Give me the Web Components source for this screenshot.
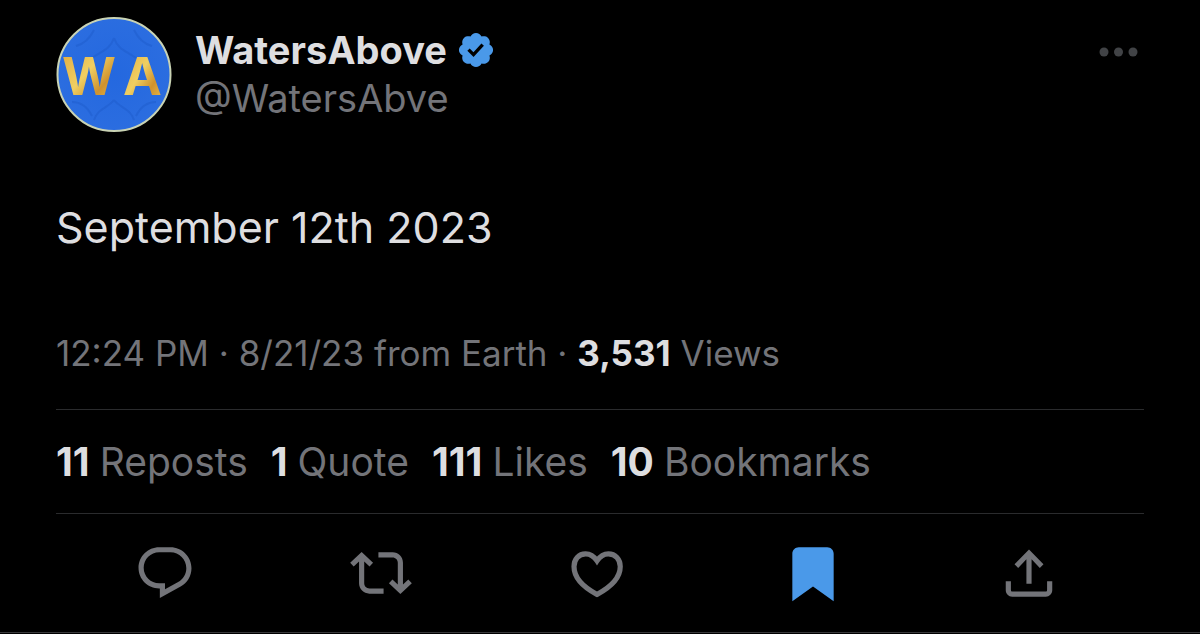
<!DOCTYPE html>
<html lang="en">
<head>
<meta charset="utf-8">
<meta name="viewport" content="width=device-width, initial-scale=1">
<title>WatersAbove: September 12th 2023</title>
<style>
  :root {
    --text: #dedee0;
    --muted: #737479;
    --accent: #4a99e9;
    --line: #2a2b2d;
    --gutter: 56px;
  }
  body {
    margin: 0;
    min-height: 100vh;
    background: #000;
    color: var(--text);
    font-family: Inter, "Liberation Sans", sans-serif;
  }
</style>
</head>
<body>
<post-card>
  <post-author slot="author" handle="@WatersAbve">WatersAbove</post-author>
  <span slot="body">September 12th 2023</span>
  <post-meta slot="meta" views="3,531">12:24 PM · 8/21/23 from Earth ·</post-meta>
  <post-stat slot="stats" count="11">Reposts</post-stat>
  <post-stat slot="stats" count="1">Quote</post-stat>
  <post-stat slot="stats" count="111">Likes</post-stat>
  <post-stat slot="stats" count="10">Bookmarks</post-stat>
  <post-action slot="actions" icon="reply" label="Reply"></post-action>
  <post-action slot="actions" icon="repost" label="Repost"></post-action>
  <post-action slot="actions" icon="like" label="Like"></post-action>
  <post-action slot="actions" icon="bookmark" label="Bookmark" active></post-action>
  <post-action slot="actions" icon="share" label="Share"></post-action>
</post-card>

<script>
const define = (name, render) => customElements.define(name, class extends HTMLElement {
  constructor() {
    super();
    this.attachShadow({ mode: 'open' }).innerHTML = render(this);
  }
});

define('post-card', () => `
  <style>
    :host { display: block; padding-top: 16px; border-bottom: 1px solid #38383a; }
    header, .body, .meta { padding: 0 var(--gutter); }
    .body { margin: 67px 0 0; font-size: 43px; line-height: 56px; }
    .meta { margin-top: 74px; }
    .stats {
      display: flex; flex-wrap: wrap; column-gap: 23px;
      margin: 32px var(--gutter) 0; padding: 28px 0 27px;
      border: solid var(--line); border-width: 1px 0;
    }
    .actions {
      display: grid; grid-template-columns: repeat(5, 1fr);
      padding: 28px 63px 28px 57px;
    }
  </style>
  <article>
    <header><slot name="author"></slot></header>
    <p class="body"><slot name="body"></slot></p>
    <div class="meta"><slot name="meta"></slot></div>
    <div class="stats"><slot name="stats"></slot></div>
    <div class="actions"><slot name="actions"></slot></div>
  </article>`);

define('user-avatar', () => `
  <style>
    :host { display: block; flex: none; width: 116px; height: 116px; }
    svg { display: block; width: 100%; height: 100%; }
    text { font: 700 52px Inter, sans-serif; fill: url(#gold); }
  </style>
  <svg viewBox="0 0 116 116" role="img" aria-label="WatersAbove avatar">
    <defs>
      <linearGradient id="gold" x1="0" y1="0" x2="1" y2="1">
        <stop offset="0" stop-color="#e0a83e"/><stop offset=".45" stop-color="#f0cf62"/>
        <stop offset=".7" stop-color="#cf922d"/><stop offset="1" stop-color="#efc653"/>
      </linearGradient>
      <radialGradient id="sea"><stop offset="0" stop-color="#2468df"/><stop offset="1" stop-color="#2b6de0"/></radialGradient>
    </defs>
    <circle cx="58" cy="58.500" r="56.500" fill="url(#sea)" stroke="#c9d3b4" stroke-width="2"/>
    <g fill="none" stroke="#1e5ccb" stroke-width="2" opacity=".5">
      <path d="M58 22c-4 12-14 14-22 20M58 22c4 12 14 14 22 20M58 84c-6 8-16 8-20 20M58 84c6 8 16 8 20 20M20 30c8-2 14-8 18-16M96 30c-8-2-14-8-18-16M16 86c10 0 16 6 20 14M100 86c-10 0-16 6-20 14"/>
    </g>
    <text x="6" y="79">W</text>
    <text x="67" y="79">A</text>
  </svg>`);

define('verified-badge', () => `
  <style>
    :host { display: block; width: 40px; height: 40px; color: var(--accent); }
    svg { display: block; width: 100%; height: 100%; fill: currentColor; }
  </style>
  <svg viewBox="0 0 22 22" role="img" aria-label="Verified account"><path d="M20.396 11c-.018-.646-.215-1.275-.57-1.816-.354-.54-.852-.972-1.438-1.246.223-.607.27-1.264.14-1.897-.131-.634-.437-1.218-.882-1.687-.47-.445-1.053-.75-1.687-.882-.633-.13-1.29-.083-1.897.14-.273-.587-.704-1.086-1.245-1.44S11.647 1.62 11 1.604c-.646.017-1.273.213-1.813.568s-.969.854-1.24 1.44c-.608-.223-1.267-.272-1.902-.14-.635.13-1.22.436-1.69.882-.445.47-.749 1.055-.878 1.688-.13.633-.08 1.29.144 1.896-.587.274-1.087.705-1.443 1.245-.356.54-.555 1.17-.574 1.817.02.647.218 1.276.574 1.817.356.54.856.972 1.443 1.245-.224.606-.274 1.263-.144 1.896.13.634.433 1.218.877 1.688.47.443 1.054.747 1.687.878.633.132 1.29.084 1.897-.136.274.586.705 1.084 1.246 1.439.54.354 1.17.551 1.816.569.647-.016 1.276-.213 1.817-.567s.972-.854 1.245-1.44c.604.239 1.266.296 1.903.164.636-.132 1.22-.447 1.68-.907.46-.46.776-1.044.908-1.681s.075-1.299-.165-1.903c.586-.274 1.084-.705 1.439-1.246.354-.54.551-1.17.569-1.816zM9.662 14.85l-3.429-3.428 1.293-1.302 2.072 2.072 4.4-4.794 1.347 1.246z"/></svg>`);

define('post-author', el => `
  <style>
    :host { display: flex; align-items: center; gap: 23px; }
    .names { flex: 1; min-width: 0; font-size: 38px; line-height: 48px; }
    .name { display: flex; align-items: center; gap: 9px; height: 48px; font-weight: 700; }
    .handle { color: var(--muted); }
    a { color: inherit; text-decoration: none; }
    button {
      align-self: flex-start; margin-top: 12px; width: 50px; height: 48px;
      padding: 0; border: 0; background: none; color: #414346; cursor: pointer;
    }
    svg { display: block; width: 50px; height: 48px; fill: currentColor; }
  </style>
  <user-avatar></user-avatar>
  <div class="names">
    <div class="name"><a href="#profile"><slot></slot></a><verified-badge></verified-badge></div>
    <div class="handle"><a href="#profile">${el.getAttribute('handle')}</a></div>
  </div>
  <button type="button" aria-label="More">
    <svg viewBox="0 0 50 48" aria-hidden="true"><circle cx="10" cy="24" r="4.500"/><circle cx="24.500" cy="24" r="4.500"/><circle cx="39" cy="24" r="4.500"/></svg>
  </button>`);

define('post-meta', el => `
  <style>
    :host { display: block; color: var(--muted); font-size: 35px; line-height: 48px; }
    strong { color: var(--text); font-weight: 700; }
  </style>
  <slot></slot> <strong>${el.getAttribute('views')}</strong> Views`);

define('post-stat', el => `
  <style>
    :host { display: block; font-size: 39px; line-height: 48px; }
    a { display: flex; gap: 10px; color: var(--muted); text-decoration: none; }
    strong { color: var(--text); font-weight: 700; }
  </style>
  <a href="#stats"><strong>${el.getAttribute('count')}</strong><slot></slot></a>`);

const icons = {
  reply: '<path d="M1.751 10c0-4.42 3.584-8 8.005-8h4.366c4.49 0 8.129 3.64 8.129 8.13 0 2.96-1.607 5.68-4.196 7.11l-8.054 4.46v-3.69h-.067c-4.49.1-8.183-3.51-8.183-8.01zm8.005-6c-3.317 0-6.005 2.69-6.005 6 0 3.37 2.77 6.08 6.138 6.01l.351-.01h1.761v2.3l5.087-2.81c1.951-1.08 3.163-3.13 3.163-5.36 0-3.39-2.744-6.13-6.129-6.13H9.756z"/>',
  repost: '<path d="M4.5 3.88l4.432 4.14-1.364 1.46L5.5 7.55V16c0 1.1.896 2 2 2H13v2H7.5c-2.209 0-4-1.79-4-4V7.55L1.432 9.48.068 8.02 4.5 3.88zM16.5 6H11V4h5.5c2.209 0 4 1.79 4 4v8.45l2.068-1.93 1.364 1.46-4.432 4.14-4.432-4.14 1.364-1.46 2.068 1.93V8c0-1.1-.896-2-2-2z"/>',
  like: '<path fill="none" stroke="currentColor" stroke-width="2" d="M12 7.3C10.700 5.400 9.200 4.600 7.600 4.600 4.900 4.600 3.100 6.700 3.100 9.500 3.100 14.100 7.300 17.800 12 20.300 16.700 17.800 21 14.100 21 9.500 21 6.700 19.100 4.600 16.400 4.600 14.800 4.600 13.300 5.400 12 7.300z"/>',
  bookmark: '<path d="M4 4.500C4 3.120 5.119 2 6.500 2h11C18.881 2 20 3.120 20 4.500v18.440l-8-5.710-8 5.710V4.500z"/>',
  share: '<path d="M12 2.9l5.600 5.700-1.410 1.420L13 6.720V16.200h-2V6.720l-3.190 3.300L6.400 8.600 12 2.900zM21 15.200v3.510c0 1.380-1.120 2.490-2.500 2.490h-13C4.110 21.200 3 20.080 3 18.700v-3.500h2v3.500c0 .280.220.5.5.5h13c.280 0 .5-.220.5-.5v-3.500h2z"/>'
};

define('post-action', el => `
  <style>
    :host { display: flex; justify-content: center; color: var(--muted); }
    :host([active]) { color: var(--accent); }
    button { padding: 0; border: 0; background: none; color: inherit; cursor: pointer; }
    svg { display: block; width: 62px; height: 62px; fill: currentColor; }
  </style>
  <button type="button" aria-label="${el.getAttribute('label')}" aria-pressed="${el.hasAttribute('active')}">
    <svg viewBox="0 0 24 24" aria-hidden="true">${icons[el.getAttribute('icon')]}</svg>
  </button>`);
</script>
</body>
</html>
